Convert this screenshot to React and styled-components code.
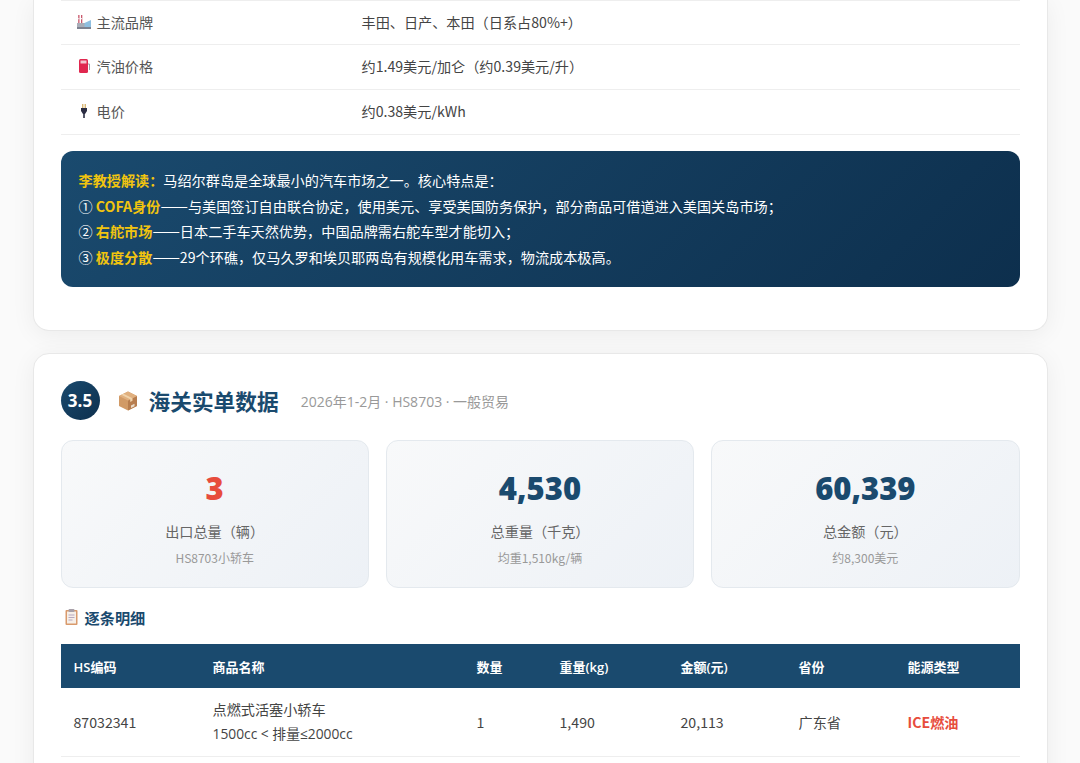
import styled, { createGlobalStyle } from "styled-components";

const Global = createGlobalStyle`
  html, body {
    margin: 0;
    height: 763px;
    overflow: hidden;
    background: #fafafa;
  }
  body {
    font-family: "Noto Sans CJK SC", "Open Sans", sans-serif;
    color: #333;
  }
`;

const Page = styled.main`
  width: 1015px;
  margin: 0 auto;
`;

const Card = styled.section`
  background: #fff;
  border: 1px solid #e8e8e8;
  border-top: ${(p) => (p.$cut ? "none" : "1px solid #e8e8e8")};
  border-radius: ${(p) => (p.$cut ? "0 0 16px 16px" : "16px")};
  box-shadow: 0 4px 24px rgba(0, 0, 0, 0.06);
  padding: ${(p) => (p.$cut ? "0 27px 43px" : "27px 27px 40px")};
  margin-bottom: 22px;
`;

const InfoRow = styled.div`
  display: grid;
  grid-template-columns: 301px 1fr;
  align-items: center;
  height: 45px;
  box-sizing: border-box;
  padding-bottom: 2px;
  border-top: ${(p) => (p.$first ? "1px solid #eee" : "none")};
  border-bottom: 1px solid #eee;
  font-size: 14.15px;
  color: #444;
`;

const InfoLabel = styled.div`
  display: flex;
  align-items: center;
  gap: 5px;
  padding-left: 15px;
  color: #555;
`;

const Callout = styled.div`
  margin-top: 16px;
  padding: 17px 18px;
  border-radius: 12px;
  background: linear-gradient(135deg, #1a4a6e, #0d2f4d);
  color: #fff;
  font-size: 14.15px;
  line-height: 25.5px;
`;

const Hi = styled.strong`
  color: #f1c40f;
  font-weight: 700;
`;

const Dash = styled.span`
  font-size: 16.4px;
  line-height: 1;
`;

const SectionHead = styled.header`
  display: flex;
  align-items: center;
  margin-bottom: 20px;
`;

const Badge = styled.div`
  width: 39px;
  height: 39px;
  border-radius: 50%;
  background: linear-gradient(135deg, #1a4a6e, #0d2f4d);
  color: #fff;
  font-family: "Open Sans", sans-serif;
  font-size: 17px;
  font-weight: 700;
  display: flex;
  align-items: center;
  justify-content: center;
  margin-right: 18px;
`;

const Title = styled.h2`
  margin: 1px 22px 0 11px;
  font-size: 21.7px;
  line-height: 30px;
  font-weight: 700;
  color: #1a4a6e;
`;

const Sub = styled.span`
  font-family: "Open Sans", "Noto Sans CJK SC", sans-serif;
  font-size: 14px;
  color: #999;
`;

const Stats = styled.div`
  display: grid;
  grid-template-columns: repeat(3, 1fr);
  gap: 17px;
`;

const Stat = styled.div`
  height: 148px;
  box-sizing: border-box;
  border: 1px solid #e4e9ee;
  border-radius: 12px;
  background: linear-gradient(135deg, #f8f9fa, #edf1f6);
  text-align: center;
  padding-top: 25px;
`;

const StatNum = styled.div`
  font-family: "Open Sans", sans-serif;
  font-size: 31px;
  line-height: 44px;
  font-weight: 800;
  color: ${(p) => (p.$red ? "#e74c3c" : "#1a4a6e")};
`;

const StatLabel = styled.div`
  font-size: 14.15px;
  line-height: 20px;
  margin-top: 11px;
  color: #666;
`;

const StatSub = styled.div`
  font-size: 12px;
  line-height: 16px;
  margin-top: 9px;
  color: #999;
`;

const SubHead = styled.h3`
  display: flex;
  align-items: center;
  gap: 7px;
  margin: 18px 0 16px 4px;
  font-size: 15.2px;
  line-height: 22px;
  font-weight: 700;
  color: #1a4a6e;
`;

const Table = styled.table`
  width: 100%;
  border-collapse: collapse;
  table-layout: fixed;
  font-size: 14.15px;
`;

const Th = styled.th`
  width: ${(p) => p.$w}px;
  height: 44px;
  padding: 0 13px;
  box-sizing: border-box;
  background: #1a4a6e;
  color: #fff;
  font-family: "Open Sans", "Noto Sans CJK SC", sans-serif;
  font-size: 13px;
  font-weight: 600;
  text-align: left;
`;

const Td = styled.td`
  padding: 9px 13px 10px;
  line-height: 24px;
  color: ${(p) => (p.$ice ? "#e74c3c" : "#444")};
  font-weight: ${(p) => (p.$ice ? 700 : 400)};
  border-bottom: 1px solid #eee;
`;

const Spec = styled.span`
  font-family: "Open Sans", "Noto Sans CJK SC", sans-serif;
  font-size: 13.8px;
`;

const FactoryIcon = () => (
  <svg width="16" height="16" viewBox="0 0 16 16">
    <path d="M2.200 1h1.300v10H2.200zM5 1h1.300v10H5z" fill="#c9566a" />
    <path d="M2.200 4h1.300v1.200H2.200zM5 4h1.300v1.200H5z" fill="#eee" />
    <rect x="1" y="9" width="8" height="6" fill="#a9adb8" />
    <path d="M8.500 9l6.500-3v9H8.500z" fill="#8fbfe0" />
    <rect x="1" y="13" width="14" height="2" fill="#7d8290" />
  </svg>
);

const FuelIcon = () => (
  <svg width="16" height="16" viewBox="0 0 16 16">
    <rect x="3" y="1" width="9" height="14" rx="1.500" fill="#e0274f" />
    <rect x="4.500" y="2.500" width="6" height="3" fill="#f3c5cf" />
    <path d="M12 6h1.500v6" stroke="#9aa0a8" fill="none" />
  </svg>
);

const PlugIcon = () => (
  <svg width="16" height="16" viewBox="0 0 16 16">
    <rect x="6.300" y="1" width="1" height="4" fill="#c99a3c" />
    <rect x="8.700" y="1" width="1" height="4" fill="#c99a3c" />
    <path d="M5 5h6v3l-2 3H7L5 8z" fill="#2b2d42" />
    <rect x="7.200" y="11" width="1.600" height="4" fill="#2b2d42" />
  </svg>
);

const BoxIcon = () => (
  <svg width="20" height="20" viewBox="0 0 20 20">
    <path d="M10 .5l9 4.500v10L10 19.500 1 15V5z" fill="#d19a66" />
    <path d="M10 9.500L19 5v10l-9 4.500z" fill="#b77d4e" />
    <path d="M10 .5L19 5l-9 4.500L1 5z" fill="#e0b07f" />
    <path d="M5.500 2.700l9 4.500v2.600l-2.300 1.100V8.300L3.300 3.800z" fill="#f0d3ab" />
    <path d="M13 14.500l3.500-1.800v2.500L13 17z" fill="#e9dccb" />
  </svg>
);

const ClipIcon = () => (
  <svg width="13" height="16" viewBox="0 0 13 16">
    <rect x=".5" y="1" width="12" height="15" rx="1" fill="#d99a6c" />
    <rect x="2" y="2.500" width="9" height="12" fill="#f6efe8" />
    <rect x="3.500" y="0" width="6" height="3" rx="1" fill="#a8a0a8" />
    <path d="M3.500 6h6M3.500 8.500h6M3.500 11h4" stroke="#b8a8c0" />
  </svg>
);

const columns = [
  ["HS编码", 139],
  ["商品名称", 264],
  ["数量", 83],
  ["重量(kg)", 121],
  ["金额(元)", 118],
  ["省份", 109],
  ["能源类型", 125],
];

function App() {
  return (
    <Page>
      <Global />
      <Card $cut>
        <InfoRow $first>
          <InfoLabel><FactoryIcon />主流品牌</InfoLabel>
          <div>丰田、日产、本田（日系占80%+）</div>
        </InfoRow>
        <InfoRow>
          <InfoLabel><FuelIcon />汽油价格</InfoLabel>
          <div>约1.49美元/加仑（约0.39美元/升）</div>
        </InfoRow>
        <InfoRow>
          <InfoLabel><PlugIcon />电价</InfoLabel>
          <div>约0.38美元/kWh</div>
        </InfoRow>
        <Callout>
          <Hi>李教授解读：</Hi>马绍尔群岛是全球最小的汽车市场之一。核心特点是：<br />
          ① <Hi>COFA身份</Hi><Dash>——</Dash>与美国签订自由联合协定，使用美元、享受美国防务保护，部分商品可借道进入美国关岛市场；<br />
          ② <Hi>右舵市场</Hi><Dash>——</Dash>日本二手车天然优势，中国品牌需右舵车型才能切入；<br />
          ③ <Hi>极度分散</Hi><Dash>——</Dash>29个环礁，仅马久罗和埃贝耶两岛有规模化用车需求，物流成本极高。
        </Callout>
      </Card>
      <Card>
        <SectionHead>
          <Badge>3.5</Badge>
          <BoxIcon />
          <Title>海关实单数据</Title>
          <Sub>2026年1-2月 · HS8703 · 一般贸易</Sub>
        </SectionHead>
        <Stats>
          <Stat>
            <StatNum $red>3</StatNum>
            <StatLabel>出口总量（辆）</StatLabel>
            <StatSub>HS8703小轿车</StatSub>
          </Stat>
          <Stat>
            <StatNum>4,530</StatNum>
            <StatLabel>总重量（千克）</StatLabel>
            <StatSub>均重1,510kg/辆</StatSub>
          </Stat>
          <Stat>
            <StatNum>60,339</StatNum>
            <StatLabel>总金额（元）</StatLabel>
            <StatSub>约8,300美元</StatSub>
          </Stat>
        </Stats>
        <SubHead><ClipIcon />逐条明细</SubHead>
        <Table>
          <thead>
            <tr>
              {columns.map(([name, w]) => (
                <Th key={name} $w={w}>{name}</Th>
              ))}
            </tr>
          </thead>
          <tbody>
            <tr>
              <Td>87032341</Td>
              <Td>点燃式活塞小轿车<br /><Spec>1500cc &lt; 排量≤2000cc</Spec></Td>
              <Td>1</Td>
              <Td>1,490</Td>
              <Td>20,113</Td>
              <Td>广东省</Td>
              <Td $ice>ICE燃油</Td>
            </tr>
          </tbody>
        </Table>
      </Card>
    </Page>
  );
}

export default App;
